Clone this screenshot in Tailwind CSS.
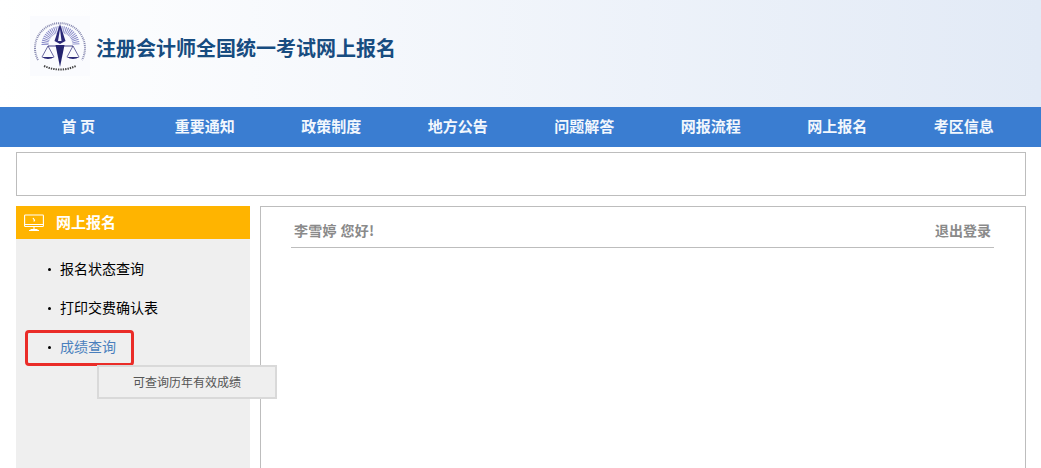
<!DOCTYPE html>
<html lang="zh-CN">
<head>
<meta charset="utf-8">
<script src="https://cdn.jsdelivr.net/npm/@tailwindcss/browser@4"></script>
</head>
<body class="bg-white overflow-hidden font-['Noto_Sans_CJK_SC','Liberation_Sans',sans-serif]">
<div class="w-[1041px] h-[468px] overflow-hidden">
  <header class="h-[107px] bg-gradient-to-r from-white to-[#e2eaf6] flex items-start pl-[30px] pt-[16px]">
    <svg class="w-[60px] h-[60px] shrink-0" viewBox="0 0 60 60" fill="none">
      <rect width="60" height="60" fill="#fafbfe"/>
      <path d="M8 44 A25 25 0 1 1 52 44" stroke="#55588f" stroke-width="2" stroke-dasharray="1 .9" opacity=".7"/>
      <path d="M15 29 A15.5 15.5 0 0 1 46 29" stroke="#7375be" stroke-width="7" stroke-dasharray=".9 .9" opacity=".85"/>
      <path d="M30 8 L35.5 25 L30 28 L24.5 25 Z" fill="#2c2a78"/>
      <path d="M30 13 L31.5 25 L28 25 Z" fill="#f3f4fb"/>
      <path d="M25.5 29 H34.5 L30 51 Z" fill="#23246e"/>
      <path d="M18 30 H43" stroke="#2c2a78" stroke-width=".9"/>
      <path d="M18 30 L12 41 M18 30 L24 41 M43 30 L37 41 M43 30 L49 41" stroke="#2c2a78" stroke-width=".7"/>
      <path d="M11.5 41 H24.5 Q18 45 11.5 41 Z M36.5 41 H49.5 Q43 45 36.5 41 Z" fill="#2c2a78"/>
      <path d="M14 50 Q30 57 46 50" stroke="#444" stroke-width="2" stroke-dasharray="1.4 1"/>
    </svg>
    <h1 class="ml-[6px] mt-[19px] text-[20px] leading-[26px] font-bold text-[#174c80] whitespace-nowrap">注册会计师全国统一考试网上报名</h1>
  </header>

  <nav class="h-10 bg-[#3a7dd1] pl-[15px] pb-[2px] flex text-[15px] font-bold text-[#f2f7fd]">
    <a class="w-[126.5px] flex items-center justify-center whitespace-pre">首 页</a>
    <a class="w-[126.5px] flex items-center justify-center">重要通知</a>
    <a class="w-[126.5px] flex items-center justify-center">政策制度</a>
    <a class="w-[126.5px] flex items-center justify-center">地方公告</a>
    <a class="w-[126.5px] flex items-center justify-center">问题解答</a>
    <a class="w-[126.5px] flex items-center justify-center">网报流程</a>
    <a class="w-[126.5px] flex items-center justify-center">网上报名</a>
    <a class="w-[126.5px] flex items-center justify-center">考区信息</a>
  </nav>

  <div class="ml-4 mt-[5px] w-[1010px] h-[44px] border border-[#bdbdbd]"></div>

  <div class="ml-4 mt-[10px] w-[1010px] flex gap-[10px] items-start">
    <aside class="w-[234px] h-[280px] bg-[#efefef] relative shrink-0">
      <div class="h-[33px] bg-[#ffb400] flex items-center pl-2 text-white font-bold text-[15px]">
        <svg class="w-[20px] h-[18px] shrink-0" viewBox="0 0 20 18" fill="none" stroke="#fff" stroke-width="1.1">
          <rect x=".6" y="1" width="18.8" height="11.5" rx=".8"/>
          <path d="M.6 10.5H19.4M10 12.5V15.5M5 16.5H15M6.5 15.5H13.5"/>
          <path d="M9 4L10.5 6.2L9.8 7.5" stroke-width="1.2"/>
        </svg>
        <span class="ml-[12px]">网上报名</span>
      </div>
      <ul class="pt-[9px] text-sm text-black">
        <li class="h-[39px] flex items-center pl-[32px]"><span class="w-[3px] h-[3px] rounded-full bg-black mr-[9px] mt-[4px]"></span>报名状态查询</li>
        <li class="h-[39px] flex items-center pl-[32px]"><span class="w-[3px] h-[3px] rounded-full bg-black mr-[9px] mt-[4px]"></span>打印交费确认表</li>
        <li class="h-[39px] flex items-center pl-[32px] text-[#4a7fbd]"><span class="w-[3px] h-[3px] rounded-full bg-black mr-[9px] mt-[4px]"></span>成绩查询</li>
      </ul>
      <div class="absolute left-[9px] top-[124px] w-[109px] h-[36px] border-[3px] border-[#ea2c28] rounded-[4px]"></div>
      <div class="absolute left-[81px] top-[159px] w-[180px] h-[34px] bg-[#efefef] border-[2px] border-[#d9d9d9] flex items-center justify-center text-xs text-[#555]">可查询历年有效成绩</div>
    </aside>
    <main class="w-[766px] h-[280px] border border-[#bdbdbd] pl-[30px] pr-[31px] pt-[10px]">
      <div class="h-[31px] pb-[4px] border-b border-[#bdbdbd] flex items-center justify-between pl-[3px] pr-[3px] text-sm font-bold text-[#8a8a8a]">
        <span class="tracking-[0.3px]">李雪婷 您好!</span>
        <span>退出登录</span>
      </div>
    </main>
  </div>
</div>
</body>
</html>
